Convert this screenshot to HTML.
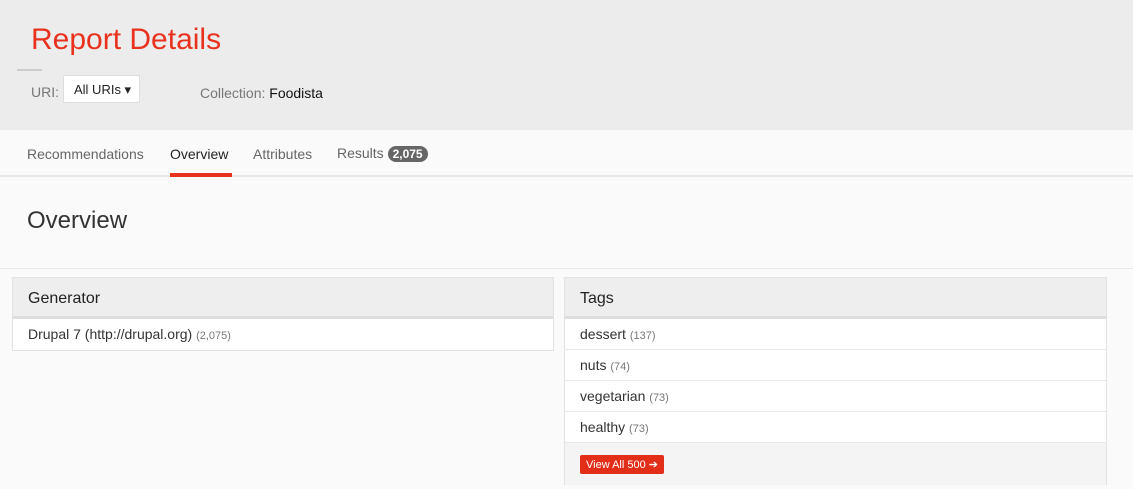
<!DOCTYPE html>
<html><head><style>
*{margin:0;padding:0;box-sizing:border-box}
body{width:1133px;height:489px;overflow:hidden;background:#fafafa;font-family:"Liberation Sans",sans-serif;position:relative}
.hdr{position:absolute;left:0;top:0;width:1133px;height:130px;background:#ececec}
.title{position:absolute;left:31px;top:23px;font-size:30px;color:#e8321e}
.dash{position:absolute;left:17px;top:69px;width:25px;height:2px;background:#ccc}
.uri{position:absolute;left:31px;top:84px;font-size:14px;color:#777}
.btn{position:absolute;left:63px;top:75px;width:77px;height:28px;background:#fff;border:1px solid #ddd;border-radius:2px;font-size:13px;color:#222;padding:6px 0 0 10px}
.coll{position:absolute;left:200px;top:85px;font-size:14px;color:#777}
.coll b{font-weight:normal;color:#111}
.tabs{position:absolute;left:0;top:130px;width:1133px;height:47px;background:#fafafa;border-bottom:2px solid #e6e6e6}
.tab{position:absolute;top:16px;font-size:14px;color:#666}
.under{position:absolute;left:170px;top:173px;width:62px;height:4px;background:#e8321e}
.badge{display:inline-block;background:#666;color:#fff;border-radius:9px;padding:1px 5px;font-size:12px;font-weight:bold}
.ov{position:absolute;left:27px;top:207px;font-size:24px;color:#333}
.sep{position:absolute;left:0;top:268px;width:1133px;height:1px;background:#e8e8e8}
.panel{position:absolute;border:1px solid #e2e2e2;background:#fff}
.ph{height:41px;background:#eee;border-bottom:3px solid #ddd;font-size:16px;color:#222;padding:12px 0 0 15px}
.row{height:31px;border-bottom:1px solid #e8e8e8;font-size:14px;color:#333;padding:7px 0 0 15px}
.row span{font-size:11px;color:#777}
.foot{background:#f4f4f4;height:42px;padding:12px 0 0 15px}
.va{display:inline-block;background:#e32e1a;color:#fff;font-size:11px;padding:3px 6px;border-radius:2px}
</style></head><body>
<div class="hdr"></div>
<div class="title">Report Details</div>
<div class="dash"></div>
<div class="uri">URI:</div>
<div class="btn">All URIs ▾</div>
<div class="coll">Collection: <b>Foodista</b></div>
<div class="tabs">
<div class="tab" style="left:27px">Recommendations</div>
<div class="tab" style="left:170px;color:#222">Overview</div>
<div class="tab" style="left:253px">Attributes</div>
<div class="tab" style="left:337px;top:15px">Results <span class="badge">2,075</span></div>
</div>
<div class="under"></div>
<div class="ov">Overview</div>
<div class="sep"></div>
<div class="panel" style="left:12px;top:277px;width:542px;height:74px">
<div class="ph">Generator</div>
<div class="row" style="border:none">Drupal 7 (http://drupal.org) <span>(2,075)</span></div>
</div>
<div class="panel" style="left:564px;top:277px;width:543px;height:208px">
<div class="ph">Tags</div>
<div class="row">dessert <span>(137)</span></div>
<div class="row">nuts <span>(74)</span></div>
<div class="row">vegetarian <span>(73)</span></div>
<div class="row">healthy <span>(73)</span></div>
<div class="foot"><span class="va">View All 500 ➔</span></div>
</div>
</body></html>
